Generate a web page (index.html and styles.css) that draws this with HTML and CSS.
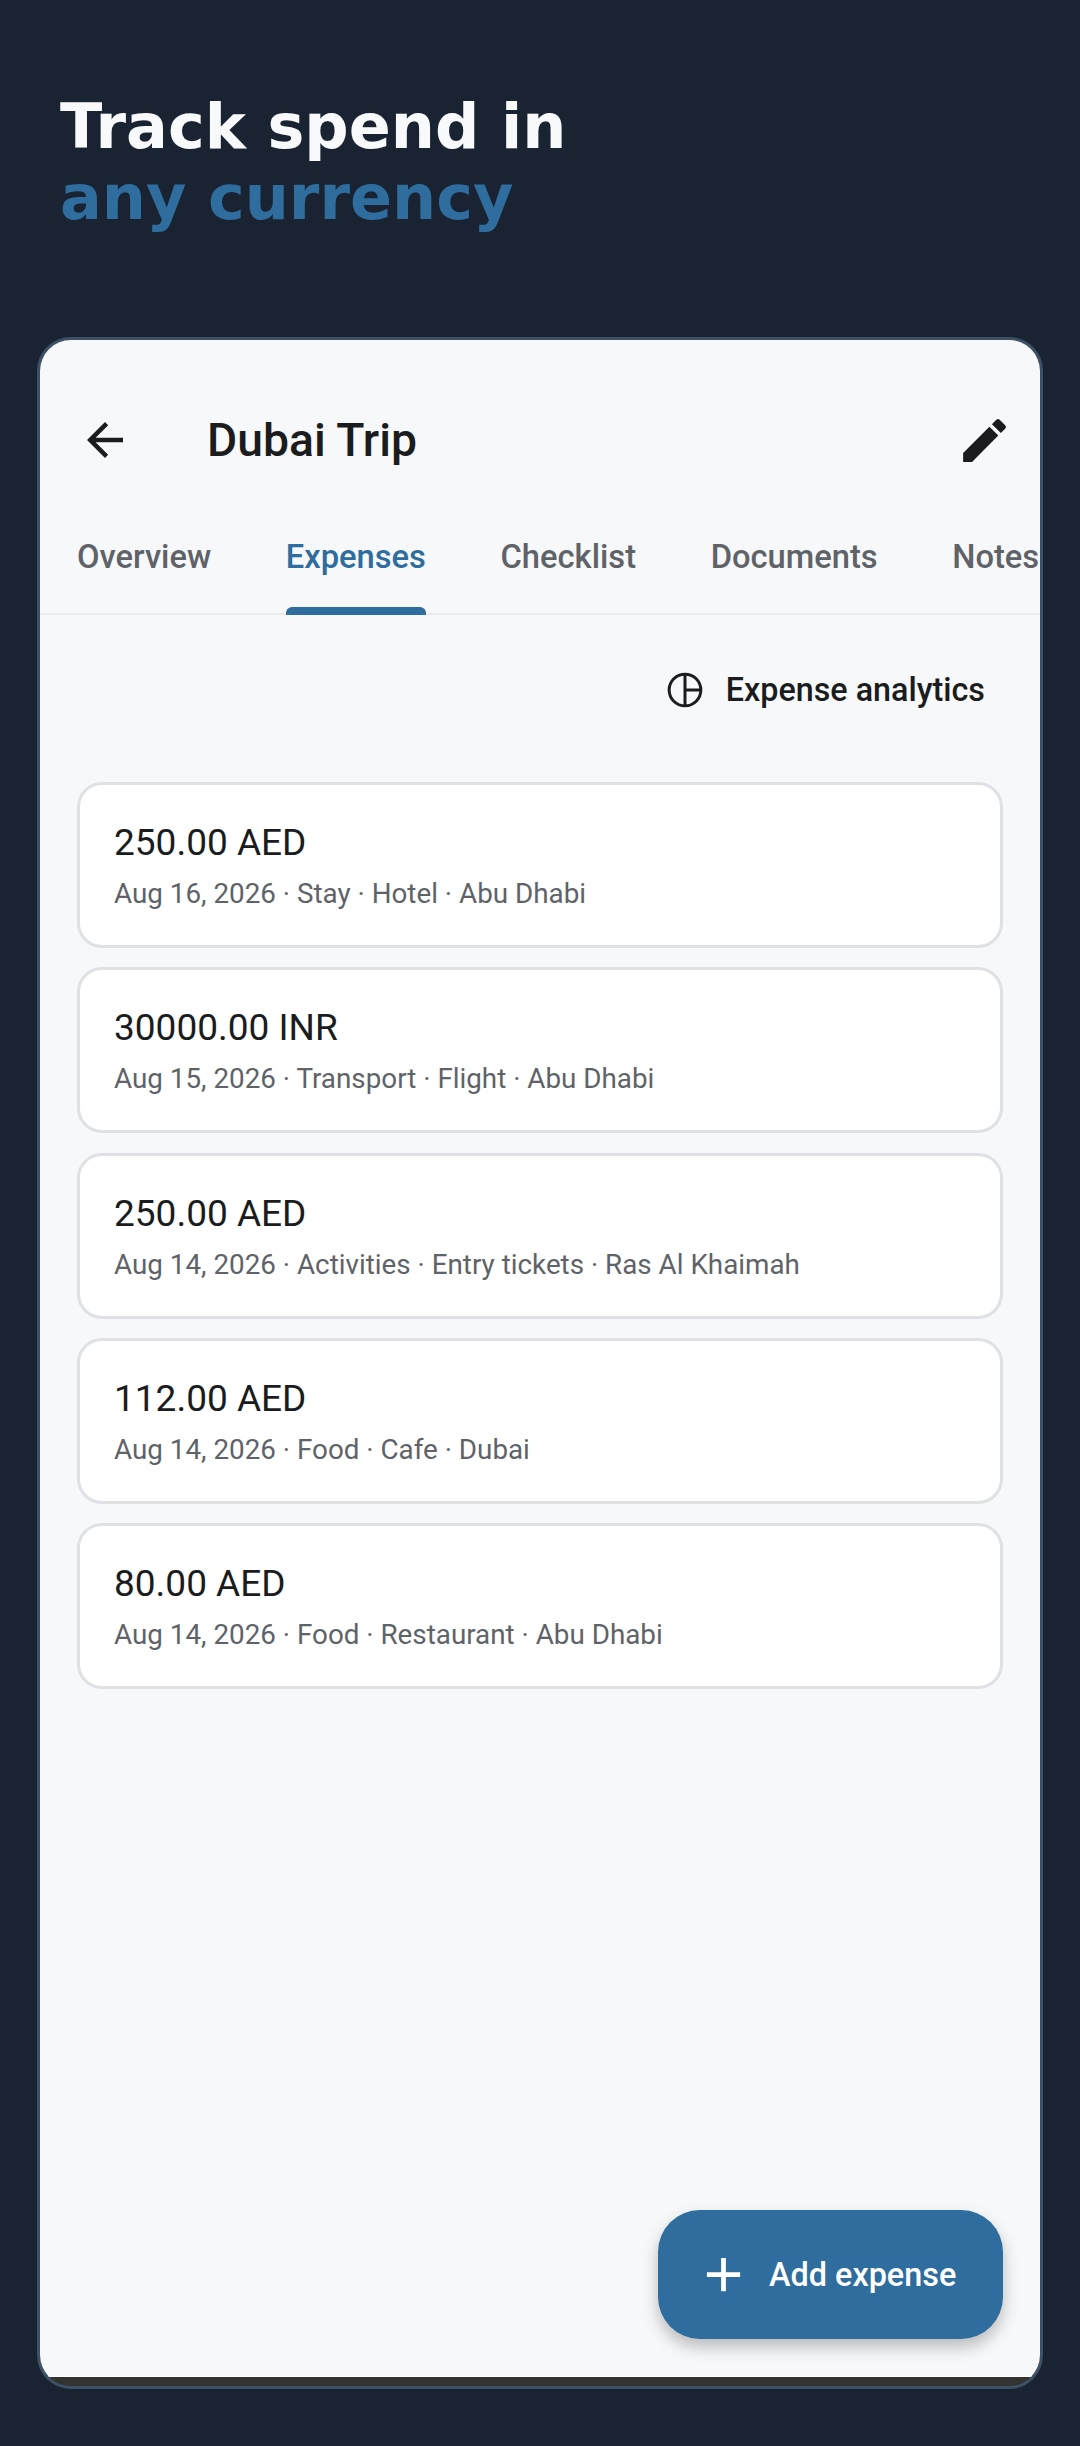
FILE: index.html
```html
<!DOCTYPE html>
<html lang="en">
<head>
  <meta charset="UTF-8" />
  <meta name="viewport" content="width=device-width, initial-scale=1.0"/>
  <title>Dubai Trip - Expenses</title>
  <link rel="stylesheet" href="styles.css">
</head>
<body>
  <h1 class="headline">Track spend in<br><span class="accent">any currency</span></h1>
  <div class="phone">
    <div class="screen">
      <header class="appbar">
        <svg class="icon back" viewBox="0 0 24 24"><path d="M20 11H7.83l5.59-5.59L12 4l-8 8 8 8 1.41-1.41L7.83 13H20v-2z"/></svg>
        <span class="title">Dubai Trip</span>
        <svg class="icon edit" viewBox="0 0 24 24"><path d="M3 17.25V21h3.75L17.81 9.94l-3.75-3.75L3 17.25zM20.71 7.04a1 1 0 0 0 0-1.41l-2.34-2.34a1 1 0 0 0-1.41 0l-1.83 1.83 3.75 3.75 1.83-1.83z"/></svg>
      </header>
      <nav class="tabs">
        <a>Overview</a>
        <a class="active">Expenses</a>
        <a>Checklist</a>
        <a>Documents</a>
        <a>Notes</a>
      </nav>
      <main class="content">
        <div class="analytics">
          <svg class="pie" viewBox="0 0 24 24"><circle cx="12" cy="12" r="9.5"/><path d="M12 2.5v19M12 12h9.5"/></svg>
          <span>Expense analytics</span>
        </div>
        <ul class="expenses">
          <li><div class="amount">250.00 AED</div><div class="meta">Aug 16, 2026 · Stay · Hotel · Abu Dhabi</div></li>
          <li><div class="amount">30000.00 INR</div><div class="meta">Aug 15, 2026 · Transport · Flight · Abu Dhabi</div></li>
          <li><div class="amount">250.00 AED</div><div class="meta">Aug 14, 2026 · Activities · Entry tickets · Ras Al Khaimah</div></li>
          <li><div class="amount">112.00 AED</div><div class="meta">Aug 14, 2026 · Food · Cafe · Dubai</div></li>
          <li><div class="amount">80.00 AED</div><div class="meta">Aug 14, 2026 · Food · Restaurant · Abu Dhabi</div></li>
        </ul>
      </main>
      <button class="fab">
        <svg class="plus" viewBox="0 0 24 24"><path d="M19 13h-6v6h-2v-6H5v-2h6V5h2v6h6v2z"/></svg>
        <span>Add expense</span>
      </button>
    </div>
  </div>
</body>
</html>
```

FILE: styles.css
```css
* { box-sizing: border-box; }
html, body { height: 100%; }
body { margin: 0; background: #1a2332; font-family: Roboto, sans-serif; padding: 60px 37px 57px; display: flex; flex-direction: column; overflow: hidden; }
.headline { margin: 31px 0 0 23px; font-family: "DejaVu Sans", sans-serif; font-size: 62px; line-height: 71px; font-weight: 700; color: #f8f9fb; height: 246px; }
.accent { color: #2e6d9e; }
.phone { flex: 1; border: 3px solid #3d5166; border-radius: 34px; background: #333432; padding-bottom: 9px; overflow: hidden; }
.screen { position: relative; height: 100%; background: #f7f8fa; border-bottom: 1px solid #fff; display: flex; flex-direction: column; overflow: hidden; }
.appbar { display: flex; align-items: center; height: 185px; padding: 15px 27px 0 38px; flex-shrink: 0; }
.icon { fill: #1a1c1e; flex-shrink: 0; }
.back { width: 54px; height: 54px; }
.edit { width: 57px; height: 57px; }
.title { margin-left: 75px; font-size: 46.3px; font-weight: 500; color: #1a1c1e; flex: 1; }
.tabs { display: flex; gap: 74.6px; padding: 0 0 0 37px; height: 90px; border-bottom: 2px solid #e9ebee; white-space: nowrap; flex-shrink: 0; }
.tabs a { position: relative; font-size: 32.7px; font-weight: 500; color: #5f6368; line-height: 65px; height: 90px; }
.tabs a.active { color: #2e6d9e; }
.tabs a.active::after { content: ""; position: absolute; left: 0; right: 0; bottom: 0; height: 8px; background: #2e6d9e; border-radius: 6px 6px 0 0; }
.content { padding: 0 37px; }
.analytics { display: flex; align-items: center; justify-content: flex-end; height: 150px; padding-right: 18px; font-size: 32.3px; font-weight: 500; color: #1a1c1e; }
.pie { width: 40px; height: 40px; margin-right: 21px; fill: none; stroke: #1a1c1e; stroke-width: 1.8; }
.expenses { list-style: none; margin: 17px 0 0; padding: 0; display: flex; flex-direction: column; gap: 19.3px; }
.expenses li { height: 166px; background: #fff; border: 3px solid #dfe1e4; border-radius: 25px; padding: 3px 34px 0; display: flex; flex-direction: column; justify-content: center; }
.amount { font-size: 37px; color: #1a1c1e; line-height: 48px; }
.meta { font-size: 27.8px; color: #5f6368; line-height: 40px; margin-top: 7px; }
.fab { position: absolute; right: 37px; bottom: 37px; width: 345px; height: 129px; border: none; border-radius: 42px; background: #2e6d9e; color: #fff; font-family: Roboto, sans-serif; font-size: 32.4px; font-weight: 500; display: flex; align-items: center; gap: 17px; padding: 0 0 0 37px; box-shadow: 0 8px 16px rgba(0,0,0,0.25); }
.plus { width: 57px; height: 57px; fill: #fff; flex-shrink: 0; }
```
